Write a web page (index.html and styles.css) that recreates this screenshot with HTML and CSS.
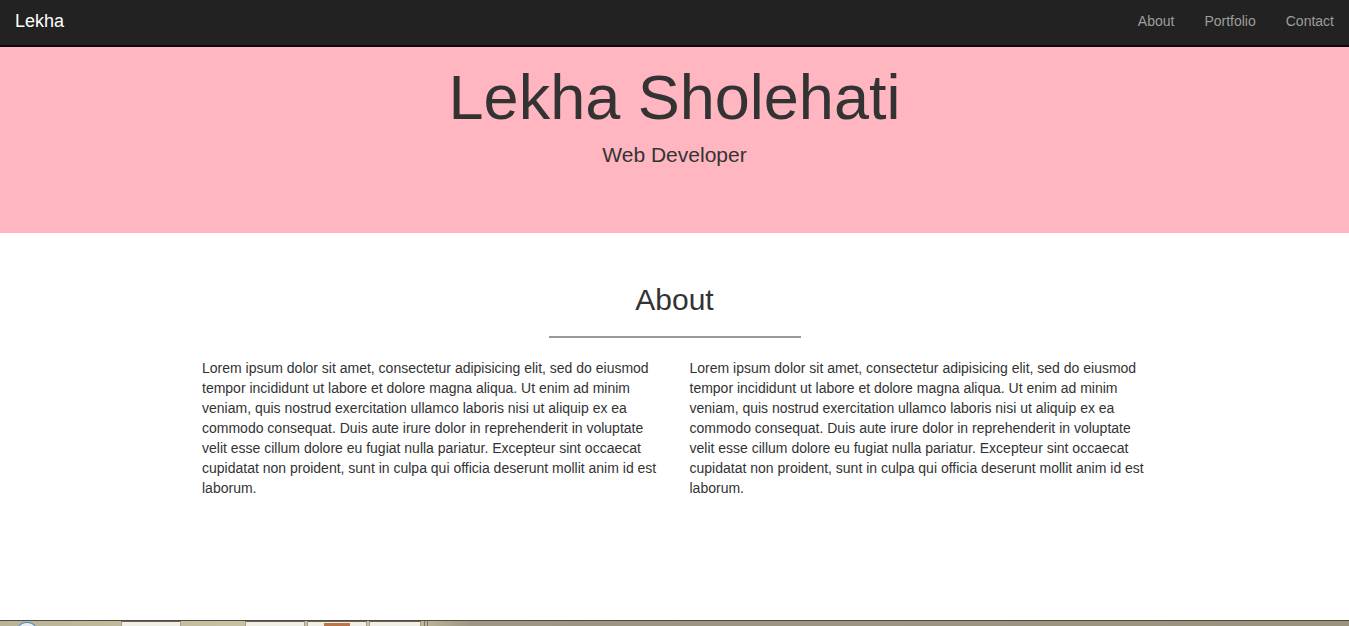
FILE: index.html
```html
<!DOCTYPE html>
<html lang="en">
<head>
<meta charset="utf-8">
<title>Lekha Sholehati</title>
<link rel="stylesheet" href="styles.css">
</head>
<body>
<nav class="navbar">
  <a class="brand" href="#">Lekha</a>
  <ul class="nav">
    <li><a href="#about">About</a></li>
    <li><a href="#portfolio">Portfolio</a></li>
    <li><a href="#contact">Contact</a></li>
  </ul>
</nav>
<header class="jumbotron">
  <h1>Lekha Sholehati</h1>
  <p class="lead">Web Developer</p>
</header>
<section class="about" id="about">
  <h2>About</h2>
  <hr class="rule">
  <div class="row">
    <p class="col">Lorem ipsum dolor sit amet, consectetur adipisicing elit, sed do eiusmod tempor incididunt ut labore et dolore magna aliqua. Ut enim ad minim veniam, quis nostrud exercitation ullamco laboris nisi ut aliquip ex ea commodo consequat. Duis aute irure dolor in reprehenderit in voluptate velit esse cillum dolore eu fugiat nulla pariatur. Excepteur sint occaecat cupidatat non proident, sunt in culpa qui officia deserunt mollit anim id est laborum.</p>
    <p class="col">Lorem ipsum dolor sit amet, consectetur adipisicing elit, sed do eiusmod tempor incididunt ut labore et dolore magna aliqua. Ut enim ad minim veniam, quis nostrud exercitation ullamco laboris nisi ut aliquip ex ea commodo consequat. Duis aute irure dolor in reprehenderit in voluptate velit esse cillum dolore eu fugiat nulla pariatur. Excepteur sint occaecat cupidatat non proident, sunt in culpa qui officia deserunt mollit anim id est laborum.</p>
  </div>
</section>
<div class="taskbar">
  <span class="orb"></span>
  <span class="tb-btn tb-1"></span>
  <span class="tb-btn tb-2"></span>
  <span class="tb-btn tb-3"></span>
  <span class="tb-btn tb-4"></span>
  <span class="tb-sep"></span>
</div>
</body>
</html>
```
FILE: styles.css
```css
* { box-sizing: border-box; }
html, body { margin: 0; padding: 0; }
body {
  font-family: "Liberation Sans", Arial, sans-serif;
  font-size: 14px;
  line-height: 20px;
  color: #333;
  background: #fff;
  overflow: hidden;
  height: 626px;
}
.navbar {
  display: flex;
  justify-content: space-between;
  align-items: center;
  height: 47px;
  background: #222;
  border-bottom: 2px solid #080808;
}
.brand {
  padding: 0 15px;
  font-size: 18px;
  line-height: 20px;
  color: #fff;
  text-decoration: none;
  margin-top: -4px;
}
.nav {
  display: flex;
  list-style: none;
  margin: -4px 0 0 0;
  padding: 0;
}
.nav a {
  display: block;
  padding: 0 15px;
  color: #9d9d9d;
  text-decoration: none;
  font-size: 14px;
  line-height: 20px;
}
.jumbotron {
  background: #ffb6c1;
  height: 186px;
  padding-top: 16px;
  text-align: center;
}
.jumbotron h1 {
  margin: 0;
  font-size: 63px;
  font-weight: 400;
  line-height: 69px;
}
.lead {
  margin: 8px 0 0;
  font-size: 21px;
  line-height: 30px;
}
.about {
  padding-top: 50px;
  text-align: center;
}
.about h2 {
  margin: 0;
  font-size: 30px;
  font-weight: 400;
  line-height: 33px;
}
.rule {
  width: 252px;
  margin: 20px auto 0;
  border: 0;
  border-top: 2px solid #999;
  height: 0;
}
.row {
  display: flex;
  justify-content: flex-start;
  width: 1170px;
  margin: 20px auto 0;
  padding-left: 97.5px;
  text-align: left;
}
.col {
  width: 487.5px;
  padding: 0 15px;
  margin: 0;
}
.taskbar {
  position: fixed;
  left: 0;
  right: 0;
  bottom: 0;
  height: 6px;
  border-top: 1px solid #4f4a3e;
  background: linear-gradient(90deg, #b9b397 0%, #cdc5a5 25%, #c9c0a0 30%, #9d9682 35%, #9a937e 100%);
}
.orb {
  position: absolute;
  left: 16px;
  top: 1px;
  width: 22px;
  height: 10px;
  border-radius: 11px 11px 0 0;
  border: 1px solid #4e86b8;
  border-bottom: 0;
  background: #e8eef2;
}
.tb-btn {
  position: absolute;
  top: 0;
  height: 5px;
  background: #f1eee6;
  border-top: 1px solid #6a6558;
  border-left: 1px solid #a39d8a;
  border-right: 1px solid #a39d8a;
}
.tb-1 { left: 121px; width: 60px; }
.tb-2 { left: 245px; width: 60px; }
.tb-3 { left: 307px; width: 60px; }
.tb-3::after {
  content: "";
  position: absolute;
  left: 16px;
  top: 1px;
  width: 26px;
  height: 4px;
  background: #b8764a;
}
.tb-4 { left: 369px; width: 52px; }
.tb-sep {
  position: absolute;
  left: 424px;
  top: 0;
  width: 4px;
  height: 5px;
  border-left: 1px solid #7a7464;
  border-right: 1px solid #7a7464;
}
```
